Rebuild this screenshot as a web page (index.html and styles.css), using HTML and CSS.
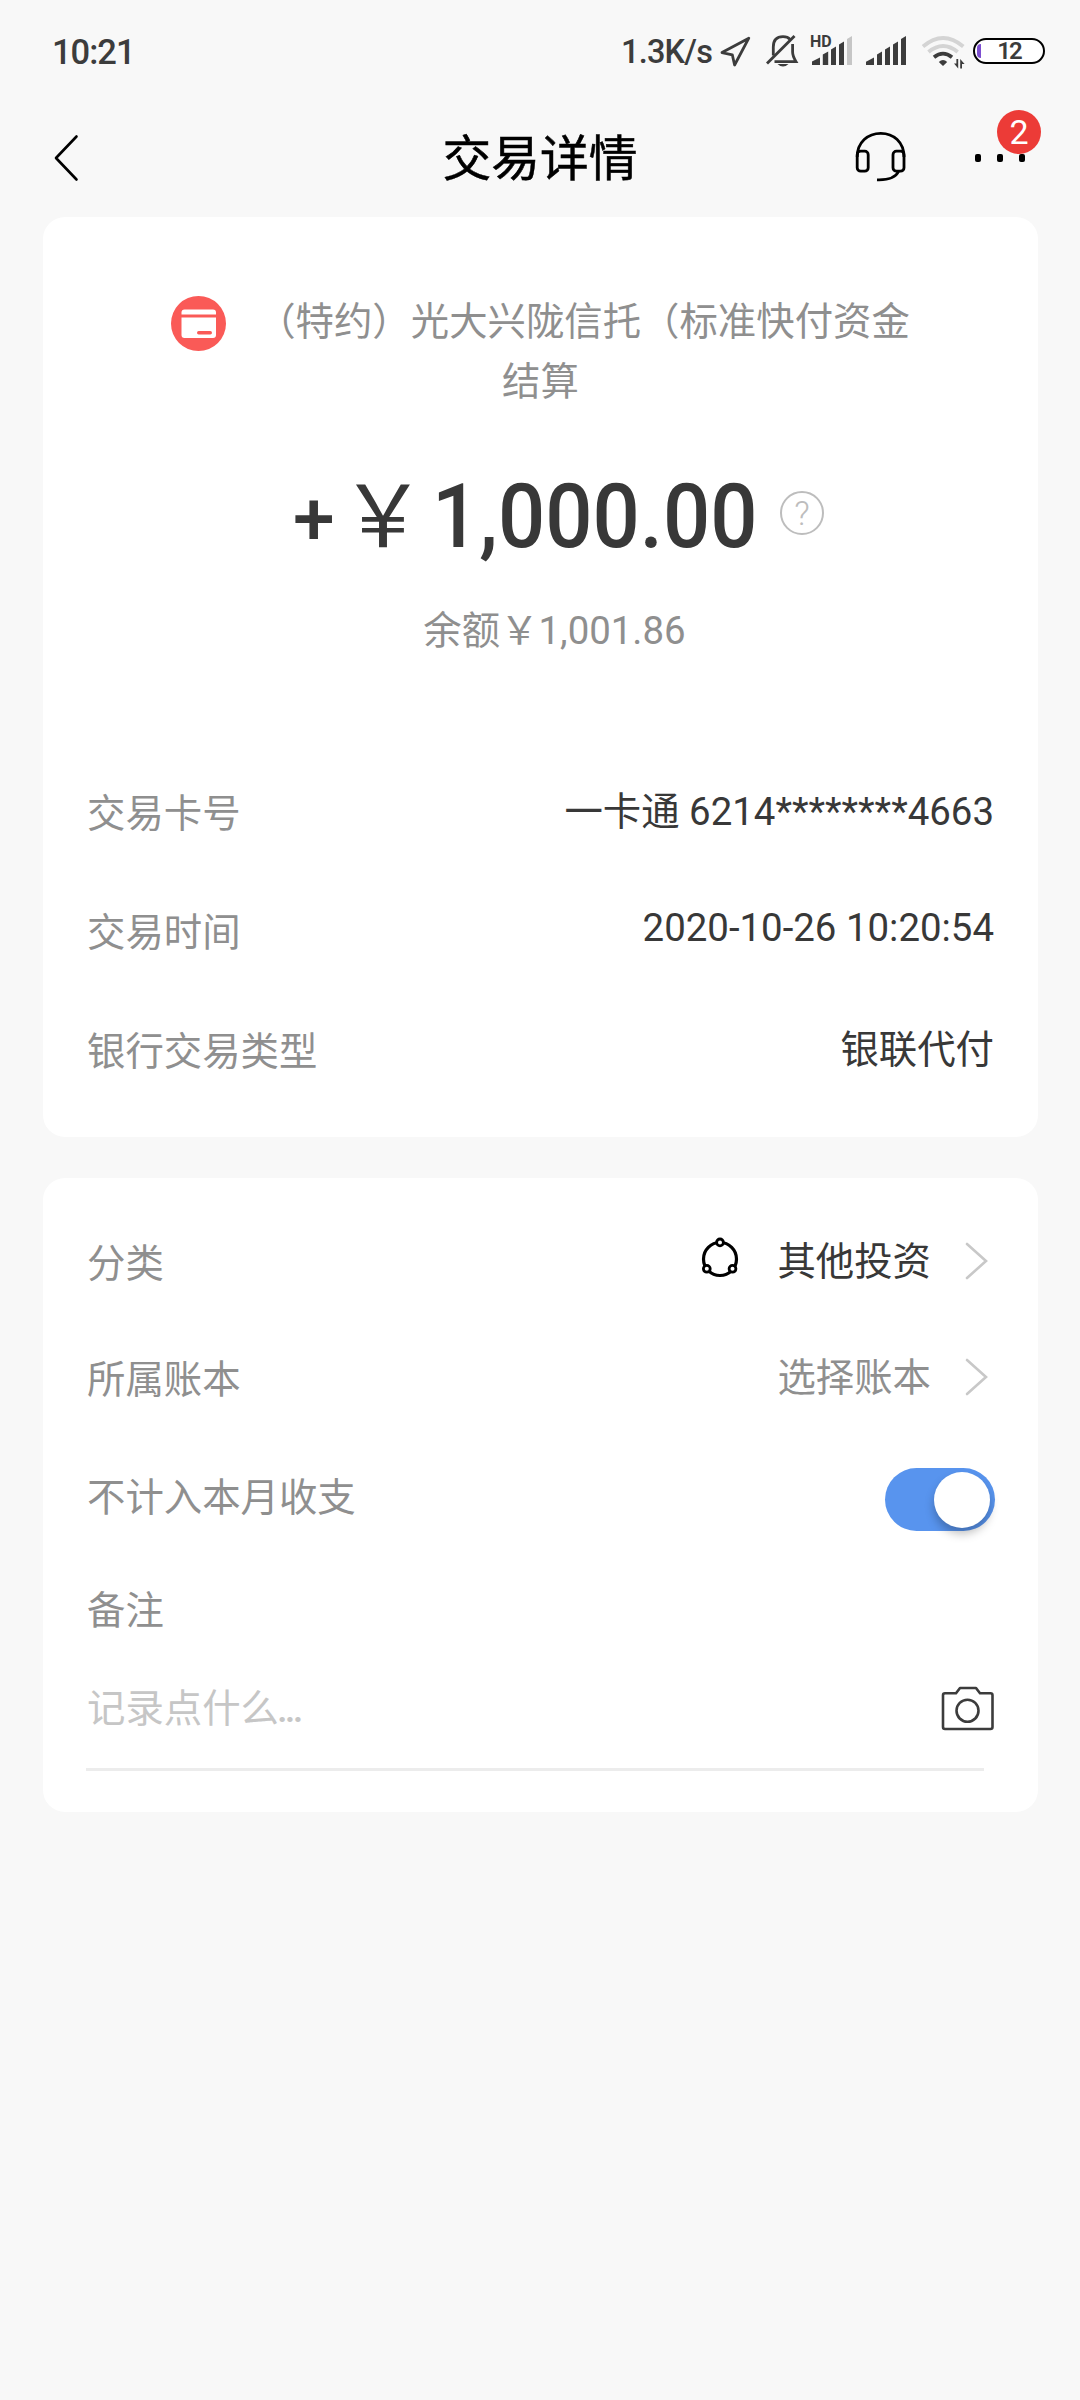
FILE: index.html
```html
<!DOCTYPE html>
<html lang="zh-CN">
<head>
    <meta charset="UTF-8">
    <title>交易详情</title>
    <link rel="stylesheet" href="styles.css">
</head>
<body>
    <!-- Status bar -->
    <div class="status-bar">
        <span class="clock">10:21</span>
        <div class="status-icons">
            <span class="speed">1.3K/s</span>
            <svg class="icon-location" width="32" height="34" viewBox="720 34 32 34">
                <path d="M748.8 38.2 L722 52.6 L732.3 54.8 L734.6 65 Z" fill="none" stroke="#3c3c3c" stroke-width="2.8" stroke-linejoin="round"/>
            </svg>
            <svg class="icon-mute" width="34" height="34" viewBox="765 34 34 34">
                <g fill="none" stroke="#3c3c3c" stroke-width="2.8">
                    <path d="M773.3 55.5 V47 C773.3 40 777 36.6 783 36.6 C786 36.6 788.5 37.5 790 39.3"/>
                    <path d="M792.6 44 V52 C792.6 56 794.5 59 796 61.6 H774.5"/>
                    <path d="M767 63.5 L794.5 36"/>
                </g>
                <path d="M777.5 64 H788.5 Q783 69 777.5 64 Z" fill="#3c3c3c"/>
            </svg>
            <div class="signal-hd">
                <span class="hd">HD</span>
                <svg width="43" height="34" viewBox="810 34 43 34">
                    <g fill="#3c3c3c">
                        <path d="M812 65 V61.5 L820 57.5 V65 Z"/>
                        <path d="M822.8 65 V54.5 L828.2 51.5 V65 Z"/>
                        <path d="M831 65 V49.5 L836 46.5 V65 Z"/>
                        <path d="M839 65 V44.5 L844 41.5 V65 Z"/>
                    </g>
                    <path d="M847 65 V39 L852 36 V65 Z" fill="#c6c6c6"/>
                </svg>
            </div>
            <svg class="icon-signal" width="42" height="34" viewBox="865 34 42 34">
                <g fill="#3c3c3c">
                    <path d="M866 65 V61.8 L874 57.5 V65 Z"/>
                    <path d="M877 65 V54.5 L882 51.5 V65 Z"/>
                    <path d="M885 65 V49.5 L890 46.5 V65 Z"/>
                    <path d="M893 65 V44.5 L898 41.5 V65 Z"/>
                    <path d="M901 65 V39 L906 36 V65 Z"/>
                </g>
            </svg>
            <svg class="icon-wifi" width="44" height="36" viewBox="921 33 44 36">
                <g fill="none" stroke-width="3.8">
                    <path d="M923 46.5 Q943 29.5 963.3 46.5" stroke="#d4d4d4"/>
                    <path d="M928.5 52 Q943 40 957.7 52" stroke="#d4d4d4"/>
                    <path d="M934 57.2 Q943 50 952 57.2" stroke="#3c3c3c"/>
                </g>
                <path d="M938.8 62 Q943 58.2 947.2 62 L943 66 Z" fill="#3c3c3c"/>
                <path d="M958.2 59 V68.5 L954 63.5 H956.4 V59 Z M960.2 68.5 V59 L964.6 64 H962 V68.5 Z" fill="#3c3c3c"/>
            </svg>
            <div class="battery"><span class="battery-level"></span><span class="battery-text">12</span></div>
        </div>
    </div>

    <!-- Header -->
    <div class="header">
        <svg class="icon-back" width="26" height="50" viewBox="0 0 26 50">
            <path d="M23.5 3.5 L3 25 L23.5 46.5" fill="none" stroke="#000" stroke-width="2.6" stroke-linecap="round" stroke-linejoin="round"/>
        </svg>
        <h1>交易详情</h1>
        <div class="header-actions">
            <svg class="icon-service" width="52" height="52" viewBox="855 131 52 52">
                <g fill="none" stroke="#000" stroke-width="2.8">
                    <path d="M857.2 157 C857.2 142 868 133.3 880.8 133.3 C893.5 133.3 904 142 904 157"/>
                    <rect x="857.2" y="151.2" width="11" height="20" rx="3.5"/>
                    <rect x="893" y="151.2" width="11" height="20" rx="3.5"/>
                    <path d="M898.5 171.5 C896 177 889 180.2 877 179.8"/>
                </g>
            </svg>
            <div class="more">
                <i></i><i></i><i></i>
                <span class="badge">2</span>
            </div>
        </div>
    </div>

    <!-- Transaction summary -->
    <div class="card summary">
        <p class="merchant">
            <svg class="icon-card" width="55" height="55" viewBox="0 0 55 55">
                <circle cx="27.5" cy="27.5" r="27.5" fill="#fa5a57"/>
                <path d="M10.5 18.5 V16.5 Q10.5 13.5 13.5 13.5 H42 Q45 13.5 45 16.5 V18.5 Z" fill="#fff"/>
                <path d="M10.5 21.5 H45 V39 Q45 42 42 42 H13.5 Q10.5 42 10.5 39 Z" fill="#fff"/>
                <rect x="26" y="35" width="15" height="3.4" rx="1.7" fill="#fa5a57"/>
            </svg>（特约）光大兴陇信托（标准快付资金结算
        </p>
        <div class="amount">
            <span class="sign">+</span>
            <span class="currency">￥</span>
            <span class="number">1,000.00</span>
            <span class="help">?</span>
        </div>
        <p class="balance">余额￥1,001.86</p>

        <div class="row">
            <span class="label">交易卡号</span>
            <span class="value">一卡通 6214********4663</span>
        </div>
        <div class="row">
            <span class="label">交易时间</span>
            <span class="value value-time">2020-10-26 10:20:54</span>
        </div>
        <div class="row">
            <span class="label">银行交易类型</span>
            <span class="value">银联代付</span>
        </div>
    </div>

    <!-- Bookkeeping settings -->
    <div class="card settings">
        <div class="row">
            <span class="label">分类</span>
            <div class="link">
                <svg class="icon-category" width="38" height="42" viewBox="701 1236 38 42">
                    <g fill="none" stroke="#000">
                        <circle cx="720" cy="1259" r="16.5" stroke-width="3.2"/>
                        <g fill="#fff" stroke-width="2.8">
                            <circle cx="720" cy="1242.4" r="3.4"/>
                            <circle cx="706.8" cy="1268.8" r="3.4"/>
                            <circle cx="732.5" cy="1268.8" r="3.4"/>
                        </g>
                    </g>
                </svg>
                <span class="value">其他投资</span>
                <svg class="chevron" width="24" height="40" viewBox="0 0 24 40">
                    <path d="M2 3 L21 20 L2 37" fill="none" stroke="#c8c8c8" stroke-width="2.6" stroke-linecap="round"/>
                </svg>
            </div>
        </div>
        <div class="row">
            <span class="label">所属账本</span>
            <div class="link">
                <span class="value muted">选择账本</span>
                <svg class="chevron" width="24" height="40" viewBox="0 0 24 40">
                    <path d="M2 3 L21 20 L2 37" fill="none" stroke="#c8c8c8" stroke-width="2.6" stroke-linecap="round"/>
                </svg>
            </div>
        </div>
        <div class="row row-toggle">
            <span class="label">不计入本月收支</span>
            <div class="toggle"><span class="knob"></span></div>
        </div>
        <div class="row row-note">
            <span class="label">备注</span>
        </div>
        <div class="row row-input">
            <span class="placeholder">记录点什么<span class="dots">...</span></span>
            <svg class="icon-camera" width="54" height="46" viewBox="941 1685 54 46">
                <g fill="none" stroke="#3c3c3c" stroke-width="2.6" stroke-linejoin="round">
                    <path d="M945 1693.3 H956 L960 1688 H976 L980 1693.3 H990.5 Q992.5 1693.3 992.5 1695.3 V1727 Q992.5 1729 990.5 1729 H945 Q943 1729 943 1727 V1695.3 Q943 1693.3 945 1693.3 Z"/>
                    <circle cx="967.5" cy="1710.7" r="11"/>
                </g>
            </svg>
        </div>
        <div class="underline"></div>
    </div>
</body>
</html>
```
FILE: styles.css
```css
/* General Styles */
* {
    box-sizing: border-box;
}

body {
    margin: 0;
    min-height: 2400px;
    background-color: #f8f8f8;
    font-family: Roboto, "Noto Sans CJK SC", sans-serif;
    font-size: 38.4px;
    color: #383838;
}

h1, p {
    margin: 0;
}

svg {
    display: block;
    flex: none;
}

/* Status bar */
.status-bar {
    display: flex;
    justify-content: space-between;
    align-items: center;
    height: 100px;
    padding: 2px 35px 0 52px;
    color: #3c3c3c;
    font-weight: 500;
}

.clock {
    margin-top: 2px;
    font-size: 34.5px;
    line-height: 40px;
    letter-spacing: -1px;
}

.status-icons {
    display: flex;
    align-items: center;
}

.speed {
    width: 99px;
    margin-top: 2px;
    font-size: 32.5px;
    line-height: 40px;
    letter-spacing: -0.8px;
    white-space: nowrap;
}

.icon-mute {
    margin-left: 13px;
}

.signal-hd {
    position: relative;
    margin-left: 11px;
}

.hd {
    position: absolute;
    left: 0;
    top: 0;
    font-size: 16px;
    line-height: 15px;
    font-weight: 700;
}

.icon-signal {
    margin-left: 12px;
}

.icon-wifi {
    margin-left: 14px;
}

.battery {
    display: flex;
    align-items: center;
    width: 72px;
    height: 26px;
    margin-left: 8px;
    padding-left: 2px;
    border: 2px solid #000;
    border-radius: 13px;
    background-color: #fff;
}

.battery-level {
    width: 4px;
    height: 14px;
    border-radius: 4px 0 0 4px;
    background-color: #7d4fd0;
}

.battery-text {
    flex: 1;
    padding-right: 6px;
    font-size: 24px;
    line-height: 24px;
    font-weight: 600;
    text-align: center;
    letter-spacing: -2px;
}

/* Header */
.header {
    display: grid;
    grid-template-columns: 1fr auto 1fr;
    align-items: center;
    height: 117px;
    padding: 0 53px;
    color: #000;
}

.header h1 {
    margin-top: 3px;
    font-size: 48.8px;
    line-height: 60px;
    font-weight: 400;
    -webkit-text-stroke: 0.5px #000;
}

.icon-back {
    margin-bottom: 2px;
}

.header-actions {
    display: flex;
    justify-content: flex-end;
    align-items: center;
}

.icon-service {
    margin-bottom: 3px;
}

.more {
    position: relative;
    display: flex;
    gap: 16px;
    margin: 0 2px 2px 68px;
}

.more i {
    width: 6px;
    height: 8px;
    border-radius: 2px;
    background-color: #000;
}

.badge {
    position: absolute;
    right: -16px;
    bottom: 8px;
    width: 44px;
    height: 44px;
    border-radius: 50%;
    background-color: #ec3b37;
    color: #fff;
    font-size: 34px;
    line-height: 44px;
    text-align: center;
}

/* Cards */
.card {
    width: 995px;
    margin-left: 43px;
    border-radius: 22px;
    background-color: #fff;
}

.row {
    display: flex;
    justify-content: space-between;
    align-items: center;
    height: 119px;
    padding: 0 44px;
    line-height: 50px;
}

.label,
.muted,
.merchant,
.balance {
    color: #8f8f8f;
}

.value {
    margin-bottom: 4px;
}

.value-time {
    margin-bottom: 10px;
}

/* Summary card */
.summary {
    height: 920px;
    padding-top: 75px;
}

.merchant {
    width: 760px;
    margin: 0 auto;
    line-height: 60px;
    text-align: center;
}

.icon-card {
    display: inline-block;
    margin: -20px 31px -20px 0;
    vertical-align: 4px;
}

.amount {
    display: flex;
    align-items: center;
    height: 120px;
    margin-top: 44px;
    padding-left: 250px;
    line-height: 100px;
    font-weight: 500;
}

.sign {
    width: 47px;
    margin-top: 3px;
    font-size: 75px;
}

.currency {
    width: 92px;
    margin-top: 4px;
    font-size: 86px;
    font-weight: 400;
}

.number {
    width: 348px;
    margin-top: 2px;
    font-size: 89.5px;
    transform: scaleX(0.93);
    transform-origin: left;
}

.help {
    width: 44px;
    height: 44px;
    margin-bottom: 6px;
    border: 2px solid #bdbdbd;
    border-radius: 50%;
    color: #bdbdbd;
    font-size: 34px;
    line-height: 41px;
    font-weight: 300;
    text-align: center;
}

.balance {
    margin: 25px 0 93px 28px;
    line-height: 60px;
    text-align: center;
}

/* Settings card */
.settings {
    height: 634px;
    margin-top: 41px;
    padding-top: 28px;
}

.settings .row {
    height: 116px;
}

.link {
    display: flex;
    align-items: center;
}

.icon-category {
    margin: 0 38px 14px 0;
}

.chevron {
    margin: 0 5px 6px 34px;
}

.settings .row-toggle {
    height: 120px;
    padding-right: 43px;
}

.toggle {
    display: flex;
    justify-content: flex-end;
    align-items: center;
    width: 110px;
    height: 63px;
    margin-top: 3px;
    padding-right: 5px;
    border-radius: 32px;
    background-color: #5894ee;
}

.knob {
    width: 56px;
    height: 56px;
    border-radius: 50%;
    background-color: #fff;
    box-shadow: 0 6px 10px rgba(0, 0, 0, 0.25);
}

.settings .row-note {
    height: 105px;
}

.settings .row-input {
    height: 105px;
    padding-right: 43px;
    padding-bottom: 14px;
}

.placeholder {
    color: #c6c6c6;
}

.dots {
    margin-left: -2px;
    letter-spacing: -2.8px;
    font-weight: 500;
}

.icon-camera {
    margin-bottom: 2px;
}

.underline {
    width: 898px;
    height: 3px;
    margin-left: 43px;
    background-color: #ececec;
}
```
